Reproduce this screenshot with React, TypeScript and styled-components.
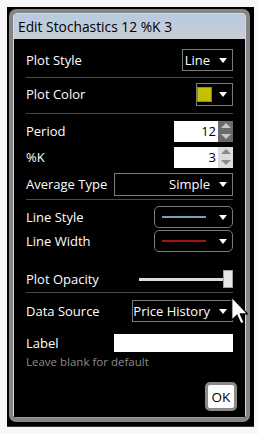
import styled, { createGlobalStyle } from "styled-components";

const GlobalStyle = createGlobalStyle`
	html, body {
		margin: 0;
		padding: 0;
		background: #f7f7f7;
	}
	body {
		font-family: "Open Sans", "Noto Sans", sans-serif;
		font-size: 13px;
	}
`;

const Page = styled.div`
	width: 258px;
	height: 434px;
	box-sizing: border-box;
	padding: 7px 4px 7px 7px;
`;

const Chart = styled.div`
	position: relative;
	height: 100%;
	box-sizing: border-box;
	background: #000;
	padding: 2px 4px 4px 2px;
	border-bottom: 1px solid #3a3a3a;
`;

const Dialog = styled.div`
	height: 100%;
	box-sizing: border-box;
	border: 4px solid #858585;
	border-radius: 7px;
	display: flex;
	flex-direction: column;
	overflow: hidden;
`;

const Inner = styled.div`
	flex: 1;
	display: flex;
	flex-direction: column;
	border: 1px solid #d8d8d8;
	border-bottom-color: #9a9a9a;
	background: #000;
`;

const TitleBar = styled.div`
	height: 25px;
	display: flex;
	align-items: center;
	padding-left: 4px;
	background: linear-gradient(#b8cadf, #c8ced6);
	color: #000;
	font-size: 13.8px;
	white-space: nowrap;
`;

const Body = styled.div`
	flex: 1;
	display: flex;
	flex-direction: column;
	padding: 0 12px;
	color: #fff;
`;

const Row = styled.div<{ $mt?: number }>`
	height: 24px;
	margin-top: ${({ $mt }) => $mt ?? 0}px;
	display: flex;
	align-items: center;
	justify-content: space-between;
`;

const Label = styled.span`
	font-size: 13px;
	color: #fff;
	white-space: nowrap;
`;

const Separator = styled.div<{ $mt: number }>`
	height: 1px;
	margin-top: ${({ $mt }) => $mt}px;
	background: #4a4a4a;
`;

const Select = styled.div<{ $w: number; $h?: number; $round?: boolean; $gap?: number }>`
	width: ${({ $w }) => $w}px;
	height: ${({ $h }) => $h ?? 22}px;
	box-sizing: border-box;
	border: 1px solid #7a7a7a;
	border-radius: ${({ $round }) => ($round ? 5 : 0)}px;
	display: flex;
	align-items: center;
	justify-content: flex-end;
	gap: ${({ $gap }) => $gap ?? 9}px;
	padding-right: 5px;
	color: #fff;
	font-size: 13px;
	white-space: nowrap;
`;

const Caret = styled.span`
	width: 0;
	height: 0;
	border-left: 4px solid transparent;
	border-right: 4px solid transparent;
	border-top: 5px solid #fff;
	flex-shrink: 0;
`;

const Swatch = styled.span<{ $color: string }>`
	width: 13px;
	height: 13px;
	background: ${({ $color }) => $color};
	border: 1px solid #808080;
`;

const LineSample = styled.span<{ $color: string }>`
	width: 44px;
	height: 2px;
	margin-right: 4px;
	background: ${({ $color }) => $color};
`;

const Spin = styled.div`
	display: flex;
	height: 21px;
`;

const NumberBox = styled.div`
	width: 44px;
	box-sizing: border-box;
	background: #fff;
	color: #000;
	font-size: 13px;
	text-align: right;
	padding-right: 2px;
	line-height: 21px;
`;

const Spinner = styled.div<{ $dark?: boolean }>`
	width: 15px;
	display: flex;
	flex-direction: column;
	align-items: center;
	justify-content: space-around;
	background: ${({ $dark }) => ($dark ? "#6b6b6b" : "#dcdcdc")};
`;

const SpinArrow = styled.span<{ $up?: boolean; $dark?: boolean }>`
	width: 0;
	height: 0;
	border-left: 5px solid transparent;
	border-right: 5px solid transparent;
	${({ $up, $dark }) =>
		$up
			? `border-bottom: 5px solid ${$dark ? "#c8c8c8" : "#8a8a8a"};`
			: `border-top: 5px solid ${$dark ? "#c8c8c8" : "#8a8a8a"};`}
`;

const Slider = styled.div`
	width: 94px;
	height: 18px;
	display: flex;
	align-items: center;
`;

const Track = styled.div`
	flex: 1;
	height: 3px;
	background: #dcdcdc;
`;

const Thumb = styled.div`
	width: 10px;
	height: 18px;
	box-sizing: border-box;
	background: #e6e6e6;
	border: 1px solid #a0a0a0;
`;

const TextInput = styled.div`
	width: 119px;
	height: 18px;
	background: #fff;
`;

const Hint = styled.div`
	height: 14px;
	line-height: 14px;
	font-size: 11.5px;
	color: #8c8c8c;
	white-space: nowrap;
`;

const Footer = styled.div`
	margin-top: 13px;
	display: flex;
	justify-content: flex-end;
	margin-right: -4px;
`;

const OkButton = styled.div`
	width: 32px;
	height: 29px;
	box-sizing: border-box;
	border: 3px solid #8a8a8a;
	border-radius: 5px;
	background: #fff;
	color: #000;
	font-size: 13.5px;
	display: flex;
	align-items: center;
	justify-content: center;
`;

// mouse pointer resting over the dialog edge
const Cursor = styled.svg`
	position: absolute;
	left: 224px;
	top: 289px;
`;

const NumberField = ({ value, dark }: { value: string; dark?: boolean }) => (
	<Spin>
		<NumberBox>{value}</NumberBox>
		<Spinner $dark={dark}>
			<SpinArrow $up $dark={dark} />
			<SpinArrow $dark={dark} />
		</Spinner>
	</Spin>
);

export default function App() {
	return (
		<Page>
			<GlobalStyle />
			<Chart>
				<Dialog>
					<Inner>
						<TitleBar>Edit Stochastics 12 %K 3</TitleBar>
						<Body>
							<Row $mt={9}>
								<Label>Plot Style</Label>
								<Select $w={51}>
									Line
									<Caret />
								</Select>
							</Row>
							<Separator $mt={5} />
							<Row $mt={4}>
								<Label>Plot Color</Label>
								<Select $w={37} $h={23} $gap={7}>
									<Swatch $color="#c2c000" />
									<Caret />
								</Select>
							</Row>
							<Separator $mt={7} />
							<Row $mt={5}>
								<Label>Period</Label>
								<NumberField value="12" dark />
							</Row>
							<Row $mt={2}>
								<Label>%K</Label>
								<NumberField value="3" />
							</Row>
							<Row $mt={3}>
								<Label>Average Type</Label>
								<Select $w={119} $h={23}>
									Simple
									<Caret />
								</Select>
							</Row>
							<Separator $mt={3} />
							<Row $mt={5}>
								<Label>Line Style</Label>
								<Select $w={79} $round>
									<LineSample $color="#6ea3bd" />
									<Caret />
								</Select>
							</Row>
							<Row>
								<Label>Line Width</Label>
								<Select $w={79} $round>
									<LineSample $color="#a01414" />
									<Caret />
								</Select>
							</Row>
							<Row $mt={14}>
								<Label>Plot Opacity</Label>
								<Slider>
									<Track />
									<Thumb />
								</Slider>
							</Row>
							<Separator $mt={1} />
							<Row $mt={6}>
								<Label>Data Source</Label>
								<Select $w={101}>
									Price History
									<Caret />
								</Select>
							</Row>
							<Row $mt={8}>
								<Label>Label</Label>
								<TextInput />
							</Row>
							<Hint>Leave blank for default</Hint>
							<Footer>
								<OkButton>OK</OkButton>
							</Footer>
						</Body>
					</Inner>
				</Dialog>
				<Cursor width="18" height="29" viewBox="0 0 12 19">
					<path
						d="M0.5 0.5 L0.5 16 L4 12.6 L6.6 18.3 L8.7 17.4 L6.2 11.8 L11 11.8 Z"
						fill="#fff"
						stroke="#000"
						strokeWidth="0.8"
						strokeLinejoin="round"
					/>
				</Cursor>
			</Chart>
		</Page>
	);
}
